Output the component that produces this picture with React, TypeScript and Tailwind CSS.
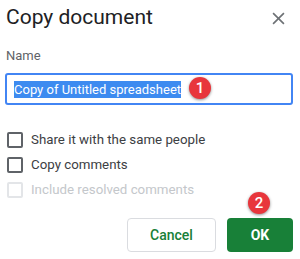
import React from 'react';

const font = { fontFamily: 'Roboto, "Liberation Sans", sans-serif' };

const Badge: React.FC<{ n: string; className: string }> = ({ n, className }) => (
  <span
    className={`absolute flex h-[22px] w-[22px] items-center justify-center rounded-full bg-[#e8363c] text-[15px] font-medium text-white shadow-[0_1px_3px_rgba(0,0,0,0.45)] ${className}`}
  >
    {n}
  </span>
);

const Check: React.FC<{ label: string; disabled?: boolean }> = ({ label, disabled }) => (
  <label className="flex h-[25px] items-center gap-2">
    <span
      className={`h-4 w-4 rounded-[2px] border-2 ${disabled ? 'border-[#e3e5e8]' : 'border-[#5f6368]'}`}
    />
    <span className={`text-[13.3px] ${disabled ? 'text-[#c4c7cb]' : 'text-[#3c4043]'}`}>{label}</span>
  </label>
);

export default function App() {
  return (
    <div style={font} className="relative h-[259px] w-[300px] overflow-hidden bg-white">
      {/* Header */}
      <div className="flex items-start justify-between pl-[6px] pr-[15px] pt-[2px]">
        <h1 className="text-[21px] leading-[30px] text-[#202124]">Copy document</h1>
        <svg className="mt-[10px]" width="13" height="13" viewBox="0 0 12 12">
          <path d="M1 1L11 11M11 1L1 11" stroke="#6d7175" strokeWidth="1.5" />
        </svg>
      </div>

      <div className="mt-[16px] pl-[6px] text-[13px] leading-[16px] text-[#5f6368]">Name</div>

      {/* Input */}
      <div className="mx-[5px] mt-[9px] flex h-[32px] w-[288px] items-center rounded-[3px] border-2 border-[#4285f4] pl-[7px]">
        <span className="bg-[#3d8bf0] text-[13px] leading-[17px] text-white">Copy of Untitled spreadsheet</span>
      </div>

      {/* Options */}
      <div className="mt-[22px] flex flex-col pl-[7px]">
        <Check label="Share it with the same people" />
        <Check label="Copy comments" />
        <Check label="Include resolved comments" disabled />
      </div>

      {/* Actions */}
      <div className="mt-[16px] flex justify-end gap-[11px] pr-[7px]">
        <button className="h-[34px] w-[89px] rounded-[4px] border border-[#dadce0] bg-white text-[14px] font-medium text-[#188038]">
          Cancel
        </button>
        <button className="h-[34px] w-[66px] rounded-[4px] bg-[#188038] text-[14px] font-bold text-white">OK</button>
      </div>

      <Badge n="1" className="left-[189px] top-[77px]" />
      <Badge n="2" className="left-[248px] top-[192px]" />
    </div>
  );
}
